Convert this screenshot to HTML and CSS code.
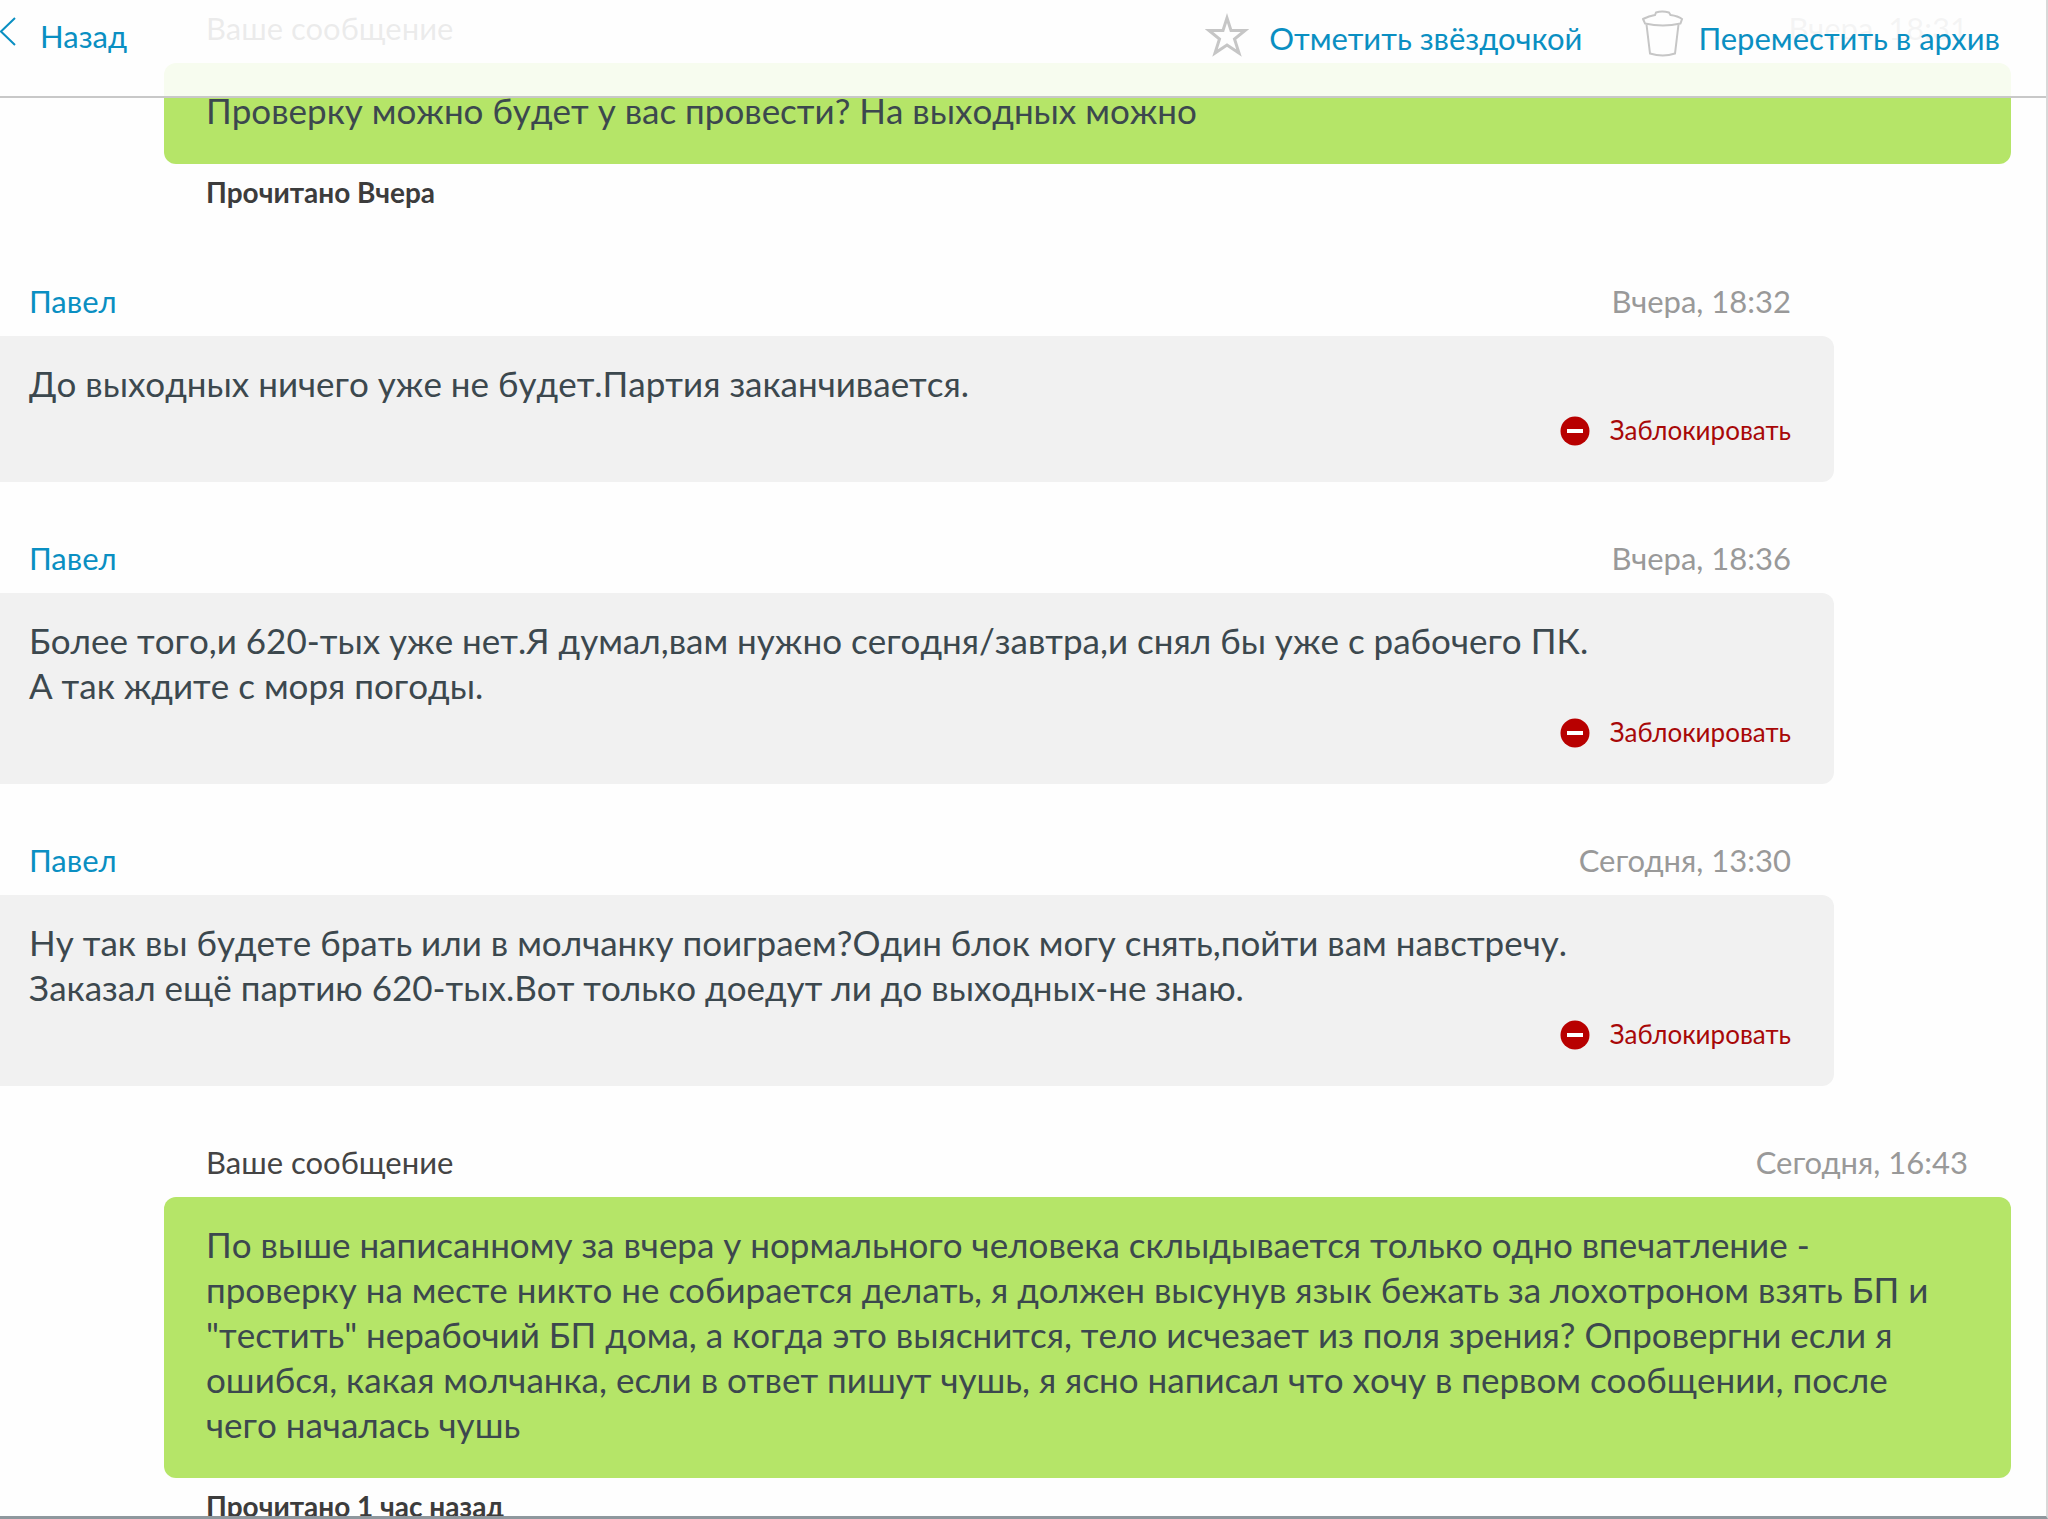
FILE: index.html
```html
<!DOCTYPE html>
<html lang="ru">
<head>
<meta charset="utf-8">
<meta name="viewport" content="width=device-width, initial-scale=1">
<title>Сообщения</title>
<link rel="stylesheet" href="styles.css">
</head>
<body>
<div class="app">
  <header class="toolbar">
    <a class="tool back" href="#">
      <svg class="back-icon" width="16" height="30" viewBox="0 0 16 30" aria-hidden="true"><path d="M15 1 1 14.500 15 28"/></svg>
      Назад
    </a>
    <div class="actions">
      <button class="tool star" type="button">
        <svg class="star-icon" width="44" height="44" viewBox="0 0 44 44" aria-hidden="true"><path d="M22 5 26 17.500H40L29.500 26 34 40 22 32 10 40 14.500 26 4 17.500H18Z"/></svg>
        Отметить звёздочкой
      </button>
      <button class="tool archive" type="button">
        <svg class="bin-icon" width="42" height="48" viewBox="0 0 42 48" aria-hidden="true"><path d="M1 9Q7 6 13 5L14 2.500Q20 .5 27 2.500L28.500 5Q36 6 40 9L38.500 13.500Q21 17.500 3 13.500Z"/><path d="M4.500 14.500 8 43.500Q21 47.500 33 43.500L36.500 14.500"/></svg>
        Переместить в архив
      </button>
    </div>
  </header>
  <main class="chat">
    <article class="message own">
      <div class="meta"><span class="author">Ваше сообщение</span><time>Вчера, 18:31</time></div>
      <div class="bubble"><p>Проверку можно будет у вас провести? На выходных можно</p></div>
      <p class="read">Прочитано Вчера</p>
    </article>
    <article class="message">
      <div class="meta"><a class="author" href="#">Павел</a><time>Вчера, 18:32</time></div>
      <div class="bubble">
        <p>До выходных ничего уже не будет.Партия заканчивается.</p>
        <button class="block" type="button"><svg width="30" height="30" viewBox="0 0 30 30" aria-hidden="true"><circle cx="15" cy="15" r="14.500"/><path d="M7 13H23V17H7Z"/></svg>Заблокировать</button>
      </div>
    </article>
    <article class="message">
      <div class="meta"><a class="author" href="#">Павел</a><time>Вчера, 18:36</time></div>
      <div class="bubble">
        <p>Более того,и 620-тых уже нет.Я думал,вам нужно сегодня/завтра,и снял бы уже с рабочего ПК.<br>А так ждите с моря погоды.</p>
        <button class="block" type="button"><svg width="30" height="30" viewBox="0 0 30 30" aria-hidden="true"><circle cx="15" cy="15" r="14.500"/><path d="M7 13H23V17H7Z"/></svg>Заблокировать</button>
      </div>
    </article>
    <article class="message">
      <div class="meta"><a class="author" href="#">Павел</a><time>Сегодня, 13:30</time></div>
      <div class="bubble">
        <p>Ну так вы будете брать или в молчанку поиграем?Один блок могу снять,пойти вам навстречу.<br>Заказал ещё партию 620-тых.Вот только доедут ли до выходных-не знаю.</p>
        <button class="block" type="button"><svg width="30" height="30" viewBox="0 0 30 30" aria-hidden="true"><circle cx="15" cy="15" r="14.500"/><path d="M7 13H23V17H7Z"/></svg>Заблокировать</button>
      </div>
    </article>
    <article class="message own">
      <div class="meta"><span class="author">Ваше сообщение</span><time>Сегодня, 16:43</time></div>
      <div class="bubble"><p>По выше написанному за вчера у нормального человека склыдывается только одно впечатление - проверку на месте никто не собирается делать, я должен высунув язык бежать за лохотроном взять БП и "тестить" нерабочий БП дома, а когда это выяснится, тело исчезает из поля зрения? Опровергни если я ошибся, какая молчанка, если в ответ пишут чушь, я ясно написал что хочу в первом сообщении, после чего началась чушь</p></div>
      <p class="read">Прочитано 1 час назад</p>
    </article>
  </main>
</div>
</body>
</html>
```
FILE: styles.css
```css
* { box-sizing: border-box; }

body {
  margin: 0;
  background: #fefefe;
  color: #3c484e;
  font-family: Lato, "Liberation Sans", sans-serif;
  font-size: 35px;
  line-height: 45px;
}

p { margin: 0; }
a { color: inherit; text-decoration: none; }

button {
  padding: 0;
  border: 0;
  background: none;
  font: inherit;
  color: inherit;
  cursor: pointer;
}

.app {
  display: flex;
  flex-direction: column;
  height: 100vh;
  overflow: hidden;
  border-right: 2px solid #d8d8d8;
  border-bottom: 3px solid #8f989e;
}

.toolbar {
  position: absolute;
  top: 0;
  left: 0;
  right: 2px;
  z-index: 1;
  display: flex;
  justify-content: space-between;
  align-items: flex-start;
  height: 98px;
  padding: 12px 46px 0 0;
  background: rgba(254, 254, 254, .9);
  border-bottom: 2px solid #c8c8c8;
}

.tool {
  display: flex;
  align-items: center;
  height: 48px;
  font-size: 31px;
  line-height: 48px;
  color: #0a8fc2;
}

.actions { display: flex; gap: 60px; padding-top: 2px; }

.back { gap: 24px; }
.star { gap: 20px; }
.archive { gap: 14px; }

.tool svg { flex: none; fill: none; stroke: #c6c6c6; }
.back-icon { margin-top: -8px; }
.tool .back-icon { stroke: #0a8fc2; stroke-width: 2; }
.star-icon { margin-top: -6px; stroke-width: 3; }
.bin-icon { margin-top: -8px; stroke-width: 2; }

.chat {
  flex: 1;
  min-height: 0;
  overflow: hidden;
  padding-top: 7px;
}

.message {
  margin: 0 212px 55px 0;
}

.own { margin: 0 35px 66px 164px; }

.meta {
  display: flex;
  justify-content: space-between;
  padding: 0 43px 14px 29px;
  font-size: 31px;
  line-height: 42px;
}

.own .meta { padding-left: 42px; }
.own .author { color: #444; }
.author { color: #0a8fc2; }
time { color: #999; }

.bubble {
  display: flex;
  flex-direction: column;
  gap: 2px;
  padding: 25px 43px 29px 29px;
  border-radius: 0 12px 12px 0;
  background: #f1f1f1;
}

.bubble p { font-kerning: none; }

.own .bubble {
  padding: 25px 60px 31px 42px;
  border-radius: 12px;
  background: #b5e568;
}

.block {
  display: flex;
  align-items: center;
  align-self: flex-end;
  gap: 20px;
  font-size: 26px;
  line-height: 45px;
  color: #a80808;
}

.block circle { fill: #b80000; }
.block path { fill: #fff; }

.read {
  padding: 6px 42px 0;
  font-size: 28px;
  font-weight: 700;
  line-height: 44px;
  color: #3c3c3c;
}
```
